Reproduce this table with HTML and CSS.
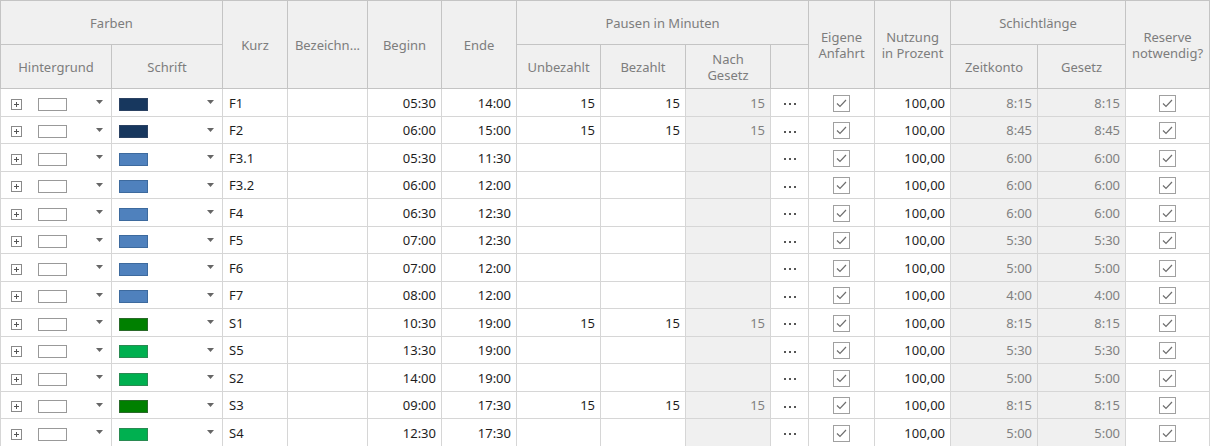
FILE: index.html
```html
<!DOCTYPE html>
<html lang="de">
<head>
<meta charset="utf-8">
<title>Schichten</title>
<link rel="stylesheet" href="styles.css">
</head>
<body>
<table class="grid">
  <colgroup>
    <col style="width:111px"><col style="width:111px"><col style="width:65px"><col style="width:80px">
    <col style="width:74px"><col style="width:75px"><col style="width:84px"><col style="width:85px">
    <col style="width:85px"><col style="width:38px"><col style="width:66px"><col style="width:76px">
    <col style="width:87px"><col style="width:88px"><col style="width:84px">
  </colgroup>
  <thead>
    <tr class="h1">
      <th colspan="2">Farben</th>
      <th rowspan="2">Kurz</th>
      <th rowspan="2">Bezeichn...</th>
      <th rowspan="2">Beginn</th>
      <th rowspan="2">Ende</th>
      <th colspan="4">Pausen in Minuten</th>
      <th rowspan="2">Eigene<br>Anfahrt</th>
      <th rowspan="2">Nutzung<br>in Prozent</th>
      <th colspan="2">Schichtlänge</th>
      <th rowspan="2">Reserve<br>notwendig?</th>
    </tr>
    <tr class="h2">
      <th>Hintergrund</th>
      <th>Schrift</th>
      <th>Unbezahlt</th>
      <th>Bezahlt</th>
      <th>Nach<br>Gesetz</th>
      <th></th>
      <th>Zeitkonto</th>
      <th>Gesetz</th>
    </tr>
  </thead>
  <tbody id="rows"></tbody>
</table>
<script src="app.js"></script>
</body>
</html>
```

FILE: app.js
```js
const data = [
  ["F1","navy","05:30","14:00","15","15","15","8:15"],
  ["F2","navy","06:00","15:00","15","15","15","8:45"],
  ["F3.1","blue","05:30","11:30","","","","6:00"],
  ["F3.2","blue","06:00","12:00","","","","6:00"],
  ["F4","blue","06:30","12:30","","","","6:00"],
  ["F5","blue","07:00","12:30","","","","5:30"],
  ["F6","blue","07:00","12:00","","","","5:00"],
  ["F7","blue","08:00","12:00","","","","4:00"],
  ["S1","dgreen","10:30","19:00","15","15","15","8:15"],
  ["S5","green","13:30","19:00","","","","5:30"],
  ["S2","green","14:00","19:00","","","","5:00"],
  ["S3","dgreen","09:00","17:30","15","15","15","8:15"],
  ["S4","green","12:30","17:30","","","","5:00"]
];
const arrow = '<svg class="arr" width="7" height="4" viewBox="0 0 7 4"><path d="M0 0H7L3.5 4Z" fill="#666"/></svg>';
const check = '<span class="cb"><svg width="11" height="9" viewBox="0 0 11 9"><path d="M1 4.5L4 7.5L10 1" fill="none" stroke="#6e6e6e" stroke-width="1.2"/></svg></span>';
const plus = '<span class="plus"><svg width="11" height="11" viewBox="0 0 11 11"><rect x="0.5" y="0.5" width="10" height="10" fill="#fff" stroke="#8a8a8a"/><path d="M3 5.5H8M5.5 3V8" stroke="#555" stroke-width="1"/></svg></span>';
const dots = '<svg class="dots" width="12" height="2" viewBox="0 0 12 2"><rect x="0" y="0" width="2" height="2" fill="#555"/><rect x="5" y="0" width="2" height="2" fill="#555"/><rect x="10" y="0" width="2" height="2" fill="#555"/></svg>';
const tb = document.getElementById("rows");
tb.innerHTML = data.map(r => `
<tr>
  <td class="clr">${plus}<span class="sw bg"></span>${arrow}</td>
  <td class="clr fg"><span class="sw ${r[1]}"></span>${arrow}</td>
  <td class="l">${r[0]}</td>
  <td></td>
  <td class="r">${r[2]}</td>
  <td class="r">${r[3]}</td>
  <td class="r">${r[4]}</td>
  <td class="r">${r[5]}</td>
  <td class="r ro">${r[6]}</td>
  <td class="c">${dots}</td>
  <td class="c">${check}</td>
  <td class="r">100,00</td>
  <td class="r ro">${r[7]}</td>
  <td class="r ro">${r[7]}</td>
  <td class="c">${check}</td>
</tr>`).join("");
```

FILE: styles.css
```css
html, body {
  margin: 0;
  padding: 0;
  background: #fff;
}
.grid {
  border-collapse: collapse;
  table-layout: fixed;
  width: 1210px;
  font-family: "Noto Sans", "Open Sans", sans-serif;
  font-size: 13px;
  color: #1e1e1e;
}
.grid th {
  background: #f0f0f0;
  color: #7d7d7d;
  font-weight: normal;
  border: 1px solid #c4c4c4;
  line-height: 16px;
  padding: 0;
  text-align: center;
  vertical-align: middle;
}
.grid tr.h1 { height: 44px; }
.grid tr.h2 { height: 44px; }
.grid td {
  border: 1px solid #d6d6d6;
  padding: 0 5px;
  line-height: 16px;
  white-space: nowrap;
  vertical-align: middle;
}
.grid tbody tr:nth-child(odd) td { height: 27px; }
.grid tbody tr:nth-child(even) td { height: 26px; }
.grid td.r { text-align: right; }
.grid td.l { text-align: left; padding-left: 6px; }
.grid td.c { text-align: center; padding: 0; }
.grid td.ro { background: #f0f0f0; color: #808080; }
.grid td.clr {
  padding: 0 8px 0 10px;
}
.grid td.clr.fg { padding-left: 7px; }
.plus {
  display: inline-block;
  width: 11px;
  height: 11px;
  vertical-align: middle;
  margin-right: 16px;
}
.plus svg, .cb svg { display: block; }
.sw {
  display: inline-block;
  width: 27px;
  height: 11px;
  border: 1px solid #8c8c8c;
  vertical-align: middle;
}
.sw.bg { background: #fff; border-color: #999; }
.sw.navy { background: #17375e; border-color: #2b4263; }
.sw.blue { background: #4f81bd; border-color: #3d6a9e; }
.sw.dgreen { background: #008000; border-color: #2a6a2a; }
.sw.green { background: #00b050; border-color: #2a8a52; }
.arr {
  float: right;
  margin-top: 6px;
}
.dots {
  display: inline-block;
  vertical-align: middle;
}
.cb {
  display: inline-block;
  width: 15px;
  height: 15px;
  border: 1px solid #a0a0a0;
  background: #fff;
  vertical-align: middle;
  box-sizing: content-box;
}
.cb svg { margin: 3px 0 0 2px; }
```
